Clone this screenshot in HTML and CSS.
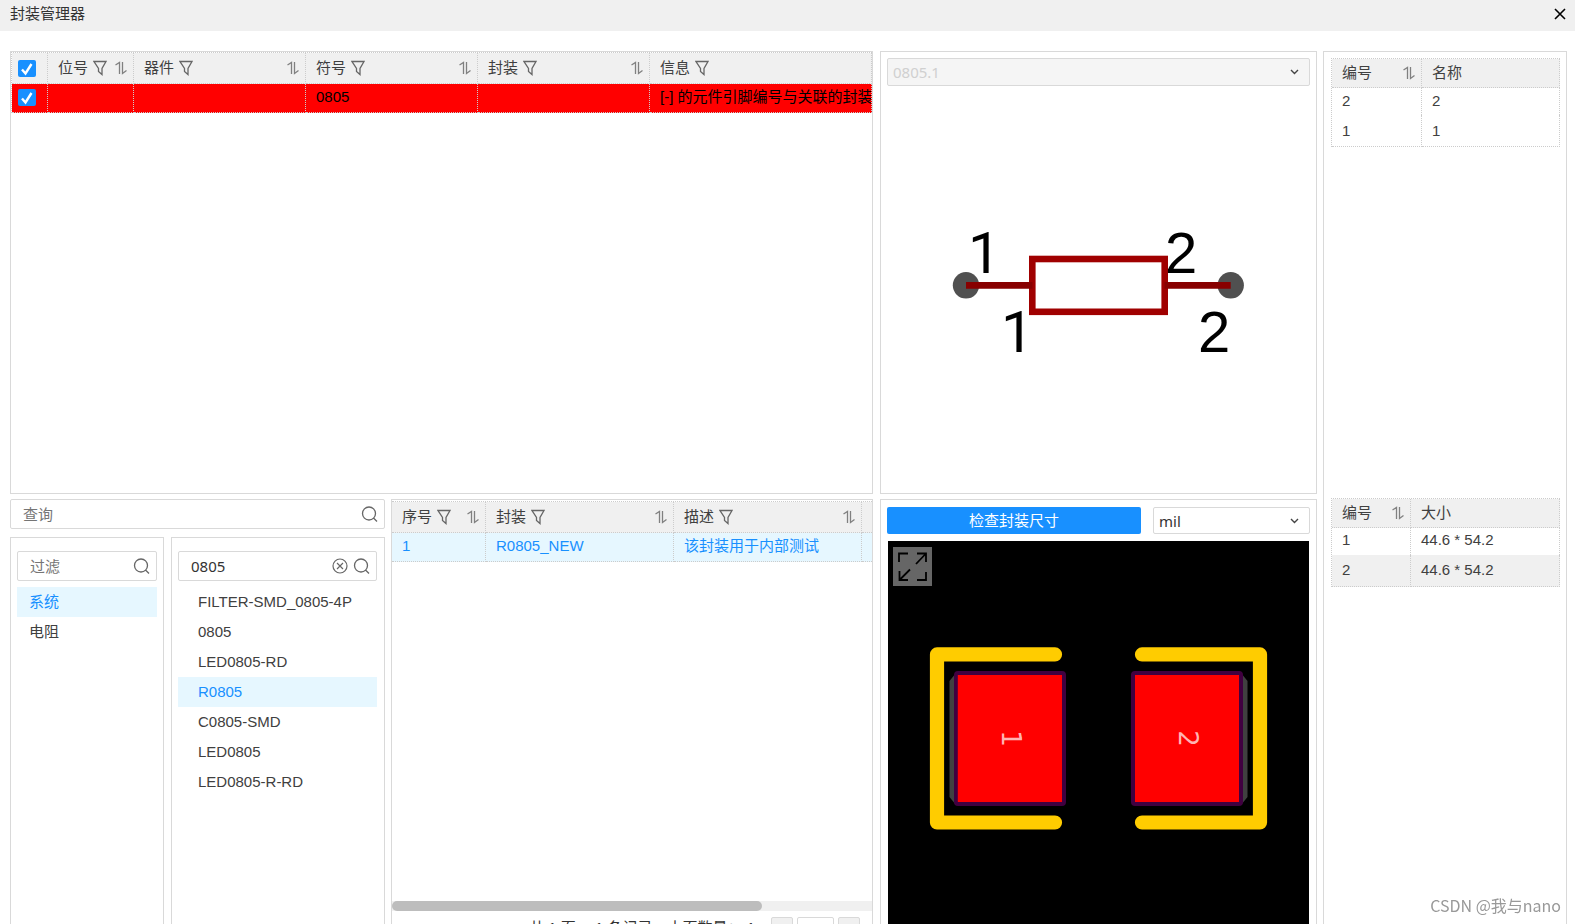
FILE: index.html
```html
<!DOCTYPE html>
<html lang="zh-CN">
<head>
<meta charset="utf-8">
<title>封装管理器</title>
<link rel="stylesheet" href="styles.css">
</head>
<body>
<svg class="sprite" aria-hidden="true">
  <symbol id="filter" viewBox="0 0 14 16"><path d="M1 1.500h12L9 8.500v6L5.500 11.500v-3z" fill="none" stroke="currentColor" stroke-width="1.300"/></symbol>
  <symbol id="sort" viewBox="0 0 12 14"><path d="M.5 4 4.500 1.500V13M7.500 1v11.500L11.500 9.500" fill="none" stroke="currentColor" stroke-width="1.300"/></symbol>
  <symbol id="search" viewBox="0 0 18 18"><path d="M8 2a6.500 6.500 0 1 1 0 13a6.500 6.500 0 1 1 0-13M12.500 13l3.500 3.500" fill="none" stroke="currentColor" stroke-width="1.300"/></symbol>
  <symbol id="clear" viewBox="0 0 16 16"><path d="M8 1a7 7 0 1 1 0 14a7 7 0 1 1 0-14M5 5l6 6M11 5l-6 6" fill="none" stroke="currentColor" stroke-width="1.200"/></symbol>
</svg>

<header class="titlebar">
  <h1 class="title">封装管理器</h1>
  <button class="close" aria-label="关闭"><svg width="12" height="12" viewBox="0 0 12 12"><path d="M1 1l10 10M11 1 1 11" stroke="#000" stroke-width="1.600"/></svg></button>
</header>

<main class="layout">
  <section class="panel parts">
    <table class="grid">
      <colgroup><col class="w-check"><col class="w-ref"><col class="w-part"><col class="w-part"><col class="w-part"><col></colgroup>
      <thead><tr>
        <th class="check"><input type="checkbox" class="box" aria-label="全选" checked></th>
        <th><div class="head">位号<svg class="filter"><use href="#filter"/></svg><svg class="sort"><use href="#sort"/></svg></div></th>
        <th><div class="head">器件<svg class="filter"><use href="#filter"/></svg><svg class="sort"><use href="#sort"/></svg></div></th>
        <th><div class="head">符号<svg class="filter"><use href="#filter"/></svg><svg class="sort"><use href="#sort"/></svg></div></th>
        <th><div class="head">封装<svg class="filter"><use href="#filter"/></svg><svg class="sort"><use href="#sort"/></svg></div></th>
        <th><div class="head">信息<svg class="filter"><use href="#filter"/></svg></div></th>
      </tr></thead>
      <tbody><tr class="error">
        <td class="check"><input type="checkbox" class="box" aria-label="选择 0805" checked></td>
        <td></td><td></td><td>0805</td><td></td><td>[-] 的元件引脚编号与关联的封装</td>
      </tr></tbody>
    </table>
  </section>

  <section class="panel symbol">
    <select class="select" aria-label="符号" disabled><option>0805.1</option></select>
    <svg class="drawing" viewBox="887 86 423 401" role="img" aria-label="电阻符号">
      <circle cx="966" cy="285.300" r="13.200" fill="#505050"/>
      <circle cx="1230.700" cy="285.300" r="13.200" fill="#505050"/>
      <rect x="1032.300" y="259" width="132.400" height="52.800" fill="none" stroke="#a00000" stroke-width="6.600"/>
      <path d="M966 285.300h66.500M1164.500 285.300h66.200" stroke="#880000" stroke-width="6.800"/>
      <g class="pin-text">
        <text class="pin-one" x="968" y="272.700">1</text>
        <text class="pin-one" x="1001" y="351.700">1</text>
        <text x="1165" y="272.700">2</text>
        <text x="1198" y="351.700">2</text>
      </g>
    </svg>
  </section>

  <section class="panel pins">
    <div class="half">
      <table class="grid boxed">
        <colgroup><col class="w-pin"><col></colgroup>
        <thead><tr><th><div class="head">编号<svg class="sort"><use href="#sort"/></svg></div></th><th>名称</th></tr></thead>
        <tbody><tr><td>2</td><td>2</td></tr><tr><td>1</td><td>1</td></tr></tbody>
      </table>
    </div>
    <div class="half">
      <table class="grid boxed striped">
        <colgroup><col class="w-pad"><col></colgroup>
        <thead><tr><th><div class="head">编号<svg class="sort"><use href="#sort"/></svg></div></th><th>大小</th></tr></thead>
        <tbody><tr><td>1</td><td>44.6 * 54.2</td></tr><tr><td>2</td><td>44.6 * 54.2</td></tr></tbody>
      </table>
    </div>
  </section>

  <section class="library">
    <div class="browser">
      <label class="field"><input type="text" placeholder="查询" aria-label="查询"><svg class="search"><use href="#search"/></svg></label>
      <div class="lists">
        <div class="panel list">
          <label class="field"><input type="text" placeholder="过滤" aria-label="过滤"><svg class="search"><use href="#search"/></svg></label>
          <ul class="items">
            <li class="item active">系统</li>
            <li class="item">电阻</li>
          </ul>
        </div>
        <div class="panel list names">
          <label class="field"><input type="text" value="0805" aria-label="封装名称"><svg class="clear"><use href="#clear"/></svg><svg class="search"><use href="#search"/></svg></label>
          <ul class="items">
            <li class="item">FILTER-SMD_0805-4P</li>
            <li class="item">0805</li>
            <li class="item">LED0805-RD</li>
            <li class="item active">R0805</li>
            <li class="item">C0805-SMD</li>
            <li class="item">LED0805</li>
            <li class="item">LED0805-R-RD</li>
          </ul>
        </div>
      </div>
    </div>
    <div class="panel results">
      <div class="scroller">
        <table class="grid wide">
          <colgroup><col class="w-index"><col class="w-pack"><col class="w-pack"><col class="w-pack"></colgroup>
          <thead><tr>
            <th><div class="head">序号<svg class="filter"><use href="#filter"/></svg><svg class="sort"><use href="#sort"/></svg></div></th>
            <th><div class="head">封装<svg class="filter"><use href="#filter"/></svg><svg class="sort"><use href="#sort"/></svg></div></th>
            <th><div class="head">描述<svg class="filter"><use href="#filter"/></svg><svg class="sort"><use href="#sort"/></svg></div></th>
            <th></th>
          </tr></thead>
          <tbody><tr class="chosen"><td>1</td><td>R0805_NEW</td><td>该封装用于内部测试</td><td></td></tr></tbody>
        </table>
      </div>
      <div class="track"><div class="thumb"></div></div>
      <div class="pager">
        <span class="count">共 1 页， 1 条记录，本页数量： 1</span>
        <button class="page" aria-label="上一页" disabled><svg width="6" height="10" viewBox="0 0 6 10"><path d="M6 0v10L0 5z" fill="#bbb"/></svg></button>
        <input class="number" type="text" value="1" aria-label="页码">
        <button class="page" aria-label="下一页" disabled><svg width="6" height="10" viewBox="0 0 6 10"><path d="M0 0v10l6-5z" fill="#bbb"/></svg></button>
      </div>
    </div>
  </section>

  <section class="panel preview">
    <div class="tools">
      <button class="primary">检查封装尺寸</button>
      <select class="select unit" aria-label="单位"><option>mil</option></select>
    </div>
    <div class="canvas">
      <svg class="drawing" viewBox="888 541 421 395" role="img" aria-label="封装预览">
        <g fill="none" stroke="#ffcc00" stroke-width="14.200" stroke-linecap="round" stroke-linejoin="round">
          <path d="M1055 654.400H937V822.500h118"/>
          <path d="M1142 654.400h118V822.500h-118"/>
        </g>
        <path d="M956 673l-6.500 8v116l6.500 8zM1241 673l6.500 8v116l-6.500 8z" fill="#404040"/>
        <g fill="#f00" stroke="#400040" stroke-width="4">
          <rect x="956" y="673" width="108" height="131" rx="2"/>
          <rect x="1133" y="673" width="108" height="131" rx="2"/>
        </g>
        <path d="M957.800 675H1062V801.700H957.800zM1135 675h104V801.700h-104z" fill="#f00"/>
        <g class="pad-text">
          <text transform="translate(1002 738.500) rotate(90)">1</text>
          <text transform="translate(1179 738.500) rotate(90)">2</text>
        </g>
      </svg>
      <button class="expand" aria-label="适应窗口"><svg width="31" height="31" viewBox="0 0 31 31"><path d="M2 11V2.500h9M20 2.500h9V11M19 13 29 2.500M29 21v8h-9M11 29H2.500v-9M2.500 29 13 18.500" fill="none" stroke="#000" stroke-width="1.800"/></svg></button>
    </div>
  </section>
</main>
<div class="watermark">CSDN @我与nano</div>
</body>
</html>
```

FILE: styles.css
```css
* { box-sizing: border-box; }

body {
  margin: 0;
  height: 100vh;
  overflow: hidden;
  background: #fff;
  color: #404040;
  font: 15px/20px "Liberation Sans", "Noto Sans CJK SC", sans-serif;
}

button, input, select { font: inherit; color: inherit; margin: 0; }
svg { flex: none; }
.sprite { display: none; }

.titlebar {
  display: flex;
  align-items: center;
  justify-content: space-between;
  height: 31px;
  padding: 0 9px 4px 10px;
  background: #f0f0f0;
}
.title { margin: 0; font-size: 15px; font-weight: 400; color: #333; }
.close { display: flex; padding: 0; border: 0; background: none; }

.layout {
  display: grid;
  grid-template-columns: 863fr 444fr 250fr;
  grid-template-rows: 443fr 445fr;
  row-gap: 5px;
  height: calc(100vh - 31px);
  margin: 20px 8px 0 10px;
}
.panel { border: 1px solid #d9d9d9; min-width: 0; min-height: 0; }

/* Tables */
.grid {
  width: 100%;
  table-layout: fixed;
  border-collapse: separate;
  border-spacing: 0;
  border-top: 1px dotted #ccc;
}
.grid th, .grid td {
  height: 29px;
  padding: 0 0 0 10px;
  border-right: 1px dotted #ccc;
  text-align: left;
  font-weight: 400;
  white-space: nowrap;
  overflow: hidden;
}
.grid th { height: 31px; background: #f0f0f0; border-bottom: 1px dotted #ccc; }
.grid tbody tr:last-child td { border-bottom: 1px dotted #ccc; }
.grid .check { padding: 0 0 0 6px; }
.head { display: flex; align-items: center; padding-right: 6px; }
.filter { width: 14px; height: 16px; margin-left: 5px; color: #666; }
.sort { width: 12px; height: 14px; margin-left: auto; color: #808080; }
.w-check { width: 36px; }
.w-ref { width: 86px; }
.w-part { width: 20%; }
.w-index { width: 94px; }
.w-pack { width: 188px; }
.w-pin { width: 90px; }
.w-pad { width: 79px; }
.error td { background: #f00; color: #000; padding-bottom: 2px; }
.error .check { padding-bottom: 2px; }
.chosen td { background: #e6f7ff; color: #1890ff; padding-bottom: 2px; }
.parts { overflow: hidden; }
.parts .grid { border-left: 1px dotted #ccc; }

.box {
  display: block;
  width: 18px;
  height: 17px;
  appearance: none;
  border-radius: 2px;
  background: #1890ff url("data:image/svg+xml,%3Csvg xmlns='http://www.w3.org/2000/svg' viewBox='0 0 18 17'%3E%3Cpath d='M4 9.500l3.500 4L13.500 4' fill='none' stroke='white' stroke-width='2.400'/%3E%3C/svg%3E") center no-repeat;
}

/* Symbol */
.symbol, .preview { display: flex; flex-direction: column; margin-left: 7px; padding: 6px; }
.select {
  width: 100%;
  height: 28px;
  padding: 0 5px;
  appearance: none;
  border: 1px solid #d9d9d9;
  border-radius: 2px;
  background: #fff url("data:image/svg+xml,%3Csvg xmlns='http://www.w3.org/2000/svg' width='9' height='6'%3E%3Cpath d='M1 1l3.500 3.500L8 1' fill='none' stroke='%23444' stroke-width='1.400'/%3E%3C/svg%3E") right 10px center no-repeat;
  font-family: "Noto Sans", sans-serif;
  color: #333;
}
.select:disabled { background-color: #f5f5f5; color: #d0d0d0; opacity: 1; }
.drawing { display: block; flex: 1; width: 100%; min-height: 0; }
.pin-text { font-size: 58px; }
.pin-one { font-family: Roboto, sans-serif; }
.pad-text { font: 26px "DejaVu Sans", sans-serif; fill: #ffb3b3; text-anchor: middle; }

/* Pins */
.pins { display: grid; grid-template-rows: 1fr 1fr; grid-row: span 2; margin-left: 6px; padding: 6px 6px 6px 7px; }
.boxed { border-left: 1px dotted #ccc; }
.boxed th { height: 29px; }
.boxed tbody td { height: 32px; }
.boxed tbody tr:first-child td { height: 27px; padding-bottom: 2px; }
.striped tbody tr:nth-child(2) td { background: #f0f0f0; }

/* Library */
.library { display: grid; grid-template-columns: 375fr 482fr; gap: 6px; min-height: 0; }
.browser { display: flex; flex-direction: column; gap: 8px; min-height: 0; }
.lists { display: grid; grid-template-columns: 154fr 214fr; gap: 7px; flex: 1; min-height: 0; }
.list { padding: 13px 6px 0; }
.names { padding-right: 7px; }
.field {
  display: flex;
  align-items: center;
  gap: 5px;
  height: 30px;
  padding: 0 5px 0 12px;
  border: 1px solid #d9d9d9;
  border-radius: 2px;
}
.field input { flex: 1; min-width: 0; padding: 0; border: 0; outline: 0; background: none; font-family: "Noto Sans", "Noto Sans CJK SC", sans-serif; color: #333; }
.field input::placeholder { color: #757575; }
.search { width: 18px; height: 18px; color: #666; }
.clear { width: 16px; height: 16px; color: #666; }
.items { margin: 6px 0 0; padding: 0; list-style: none; }
.item { height: 30px; padding: 0 12px; line-height: 30px; white-space: nowrap; }
.names .item { padding: 0 20px; }
.active { background: #e6f7ff; color: #1890ff; }

.results { display: flex; flex-direction: column; padding-top: 1px; }
.scroller { flex: 1; overflow: hidden; }
.wide { width: 658px; }
.track { height: 10px; background: #f0f0f0; }
.thumb { width: 77%; height: 10px; border-radius: 5px; background: #bdbdbd; }
.pager { display: flex; justify-content: flex-end; gap: 4px; padding: 6px 12px 2px 0; }
.count { margin-right: 12px; line-height: 22px; color: #333; }
.page { display: grid; place-items: center; width: 22px; height: 24px; padding: 0; border: 1px solid #d9d9d9; border-radius: 2px; background: #f0f0f0; }
.number { width: 37px; height: 24px; padding: 0; border: 1px solid #d9d9d9; border-radius: 2px; text-align: center; line-height: 20px; }

/* Preview */
.preview { padding: 7px 6px; }
.tools { display: grid; grid-template-columns: 254fr 157fr; gap: 12px; margin-bottom: 7px; }
.tools .unit, .primary { height: 27px; }
.primary { border: 0; border-radius: 2px; background: #1890ff; color: #fff; padding: 0; }
.canvas { position: relative; display: flex; flex: 1; min-height: 0; margin: 0 1px; background: #000; }
.expand { position: absolute; top: 6px; left: 5px; display: grid; place-items: center; width: 39px; height: 39px; padding: 0; border: 0; background: #666; }

.watermark { position: fixed; right: 14px; bottom: 9px; font: 16px/20px "Noto Sans CJK SC", sans-serif; color: #999; }
```
